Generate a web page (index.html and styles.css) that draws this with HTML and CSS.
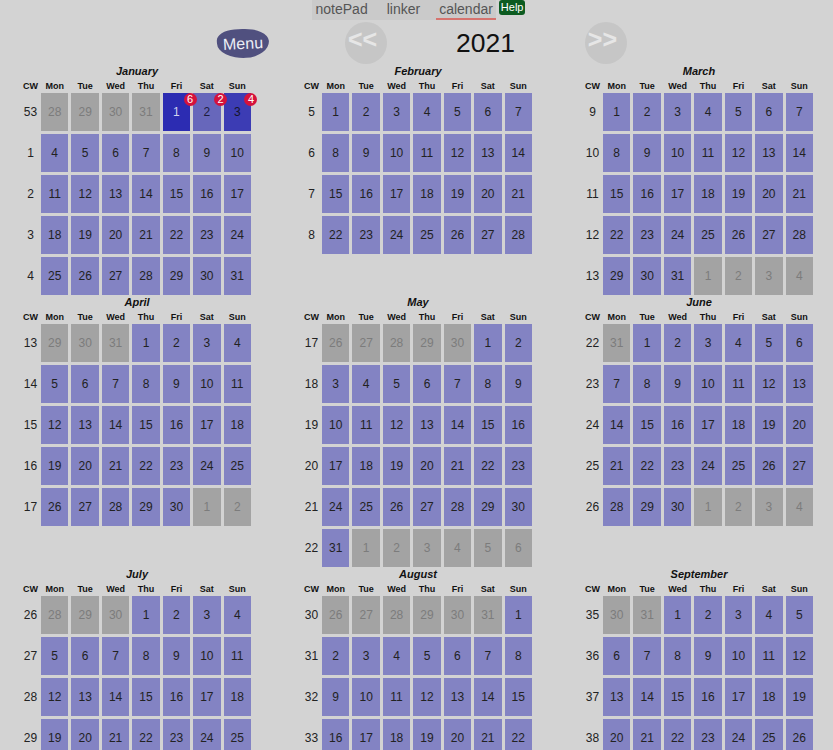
FILE: index.html
```html
<!DOCTYPE html>
<html lang="en">
<head>
<meta charset="utf-8">
<title>calendar</title>
<link rel="stylesheet" href="styles.css">
</head>
<body>
<nav class="nav">
  <div class="tabs">
    <span class="tab">notePad</span>
    <span class="tab">linker</span>
    <span class="tab active">calendar</span>
  </div>
  <span class="help">Help</span>
</nav>
<div class="toolbar">
  <div class="menu">Menu</div>
  <div class="arrow">&lt;&lt;</div>
  <div class="year">2021</div>
  <div class="arrow">&gt;&gt;</div>
</div>
<main class="cal">

<section class="month"><div class="mtitle">January</div><div class="mgrid">
<span class="h">CW</span><span class="h">Mon</span><span class="h">Tue</span><span class="h">Wed</span><span class="h">Thu</span><span class="h">Fri</span><span class="h">Sat</span><span class="h">Sun</span>
<span class="cw">53</span><span class="d o">28</span><span class="d o">29</span><span class="d o">30</span><span class="d o">31</span><span class="d s1">1<i class="badge">6</i></span><span class="d s2">2<i class="badge">2</i></span><span class="d s3">3<i class="badge">4</i></span>
<span class="cw">1</span><span class="d">4</span><span class="d">5</span><span class="d">6</span><span class="d">7</span><span class="d">8</span><span class="d">9</span><span class="d">10</span>
<span class="cw">2</span><span class="d">11</span><span class="d">12</span><span class="d">13</span><span class="d">14</span><span class="d">15</span><span class="d">16</span><span class="d">17</span>
<span class="cw">3</span><span class="d">18</span><span class="d">19</span><span class="d">20</span><span class="d">21</span><span class="d">22</span><span class="d">23</span><span class="d">24</span>
<span class="cw">4</span><span class="d">25</span><span class="d">26</span><span class="d">27</span><span class="d">28</span><span class="d">29</span><span class="d">30</span><span class="d">31</span>
</div></section>

<section class="month"><div class="mtitle">February</div><div class="mgrid">
<span class="h">CW</span><span class="h">Mon</span><span class="h">Tue</span><span class="h">Wed</span><span class="h">Thu</span><span class="h">Fri</span><span class="h">Sat</span><span class="h">Sun</span>
<span class="cw">5</span><span class="d">1</span><span class="d">2</span><span class="d">3</span><span class="d">4</span><span class="d">5</span><span class="d">6</span><span class="d">7</span>
<span class="cw">6</span><span class="d">8</span><span class="d">9</span><span class="d">10</span><span class="d">11</span><span class="d">12</span><span class="d">13</span><span class="d">14</span>
<span class="cw">7</span><span class="d">15</span><span class="d">16</span><span class="d">17</span><span class="d">18</span><span class="d">19</span><span class="d">20</span><span class="d">21</span>
<span class="cw">8</span><span class="d">22</span><span class="d">23</span><span class="d">24</span><span class="d">25</span><span class="d">26</span><span class="d">27</span><span class="d">28</span>
</div></section>

<section class="month"><div class="mtitle">March</div><div class="mgrid">
<span class="h">CW</span><span class="h">Mon</span><span class="h">Tue</span><span class="h">Wed</span><span class="h">Thu</span><span class="h">Fri</span><span class="h">Sat</span><span class="h">Sun</span>
<span class="cw">9</span><span class="d">1</span><span class="d">2</span><span class="d">3</span><span class="d">4</span><span class="d">5</span><span class="d">6</span><span class="d">7</span>
<span class="cw">10</span><span class="d">8</span><span class="d">9</span><span class="d">10</span><span class="d">11</span><span class="d">12</span><span class="d">13</span><span class="d">14</span>
<span class="cw">11</span><span class="d">15</span><span class="d">16</span><span class="d">17</span><span class="d">18</span><span class="d">19</span><span class="d">20</span><span class="d">21</span>
<span class="cw">12</span><span class="d">22</span><span class="d">23</span><span class="d">24</span><span class="d">25</span><span class="d">26</span><span class="d">27</span><span class="d">28</span>
<span class="cw">13</span><span class="d">29</span><span class="d">30</span><span class="d">31</span><span class="d o">1</span><span class="d o">2</span><span class="d o">3</span><span class="d o">4</span>
</div></section>

<section class="month"><div class="mtitle">April</div><div class="mgrid">
<span class="h">CW</span><span class="h">Mon</span><span class="h">Tue</span><span class="h">Wed</span><span class="h">Thu</span><span class="h">Fri</span><span class="h">Sat</span><span class="h">Sun</span>
<span class="cw">13</span><span class="d o">29</span><span class="d o">30</span><span class="d o">31</span><span class="d">1</span><span class="d">2</span><span class="d">3</span><span class="d">4</span>
<span class="cw">14</span><span class="d">5</span><span class="d">6</span><span class="d">7</span><span class="d">8</span><span class="d">9</span><span class="d">10</span><span class="d">11</span>
<span class="cw">15</span><span class="d">12</span><span class="d">13</span><span class="d">14</span><span class="d">15</span><span class="d">16</span><span class="d">17</span><span class="d">18</span>
<span class="cw">16</span><span class="d">19</span><span class="d">20</span><span class="d">21</span><span class="d">22</span><span class="d">23</span><span class="d">24</span><span class="d">25</span>
<span class="cw">17</span><span class="d">26</span><span class="d">27</span><span class="d">28</span><span class="d">29</span><span class="d">30</span><span class="d o">1</span><span class="d o">2</span>
</div></section>

<section class="month"><div class="mtitle">May</div><div class="mgrid">
<span class="h">CW</span><span class="h">Mon</span><span class="h">Tue</span><span class="h">Wed</span><span class="h">Thu</span><span class="h">Fri</span><span class="h">Sat</span><span class="h">Sun</span>
<span class="cw">17</span><span class="d o">26</span><span class="d o">27</span><span class="d o">28</span><span class="d o">29</span><span class="d o">30</span><span class="d">1</span><span class="d">2</span>
<span class="cw">18</span><span class="d">3</span><span class="d">4</span><span class="d">5</span><span class="d">6</span><span class="d">7</span><span class="d">8</span><span class="d">9</span>
<span class="cw">19</span><span class="d">10</span><span class="d">11</span><span class="d">12</span><span class="d">13</span><span class="d">14</span><span class="d">15</span><span class="d">16</span>
<span class="cw">20</span><span class="d">17</span><span class="d">18</span><span class="d">19</span><span class="d">20</span><span class="d">21</span><span class="d">22</span><span class="d">23</span>
<span class="cw">21</span><span class="d">24</span><span class="d">25</span><span class="d">26</span><span class="d">27</span><span class="d">28</span><span class="d">29</span><span class="d">30</span>
<span class="cw">22</span><span class="d">31</span><span class="d o">1</span><span class="d o">2</span><span class="d o">3</span><span class="d o">4</span><span class="d o">5</span><span class="d o">6</span>
</div></section>

<section class="month"><div class="mtitle">June</div><div class="mgrid">
<span class="h">CW</span><span class="h">Mon</span><span class="h">Tue</span><span class="h">Wed</span><span class="h">Thu</span><span class="h">Fri</span><span class="h">Sat</span><span class="h">Sun</span>
<span class="cw">22</span><span class="d o">31</span><span class="d">1</span><span class="d">2</span><span class="d">3</span><span class="d">4</span><span class="d">5</span><span class="d">6</span>
<span class="cw">23</span><span class="d">7</span><span class="d">8</span><span class="d">9</span><span class="d">10</span><span class="d">11</span><span class="d">12</span><span class="d">13</span>
<span class="cw">24</span><span class="d">14</span><span class="d">15</span><span class="d">16</span><span class="d">17</span><span class="d">18</span><span class="d">19</span><span class="d">20</span>
<span class="cw">25</span><span class="d">21</span><span class="d">22</span><span class="d">23</span><span class="d">24</span><span class="d">25</span><span class="d">26</span><span class="d">27</span>
<span class="cw">26</span><span class="d">28</span><span class="d">29</span><span class="d">30</span><span class="d o">1</span><span class="d o">2</span><span class="d o">3</span><span class="d o">4</span>
</div></section>

<section class="month"><div class="mtitle">July</div><div class="mgrid">
<span class="h">CW</span><span class="h">Mon</span><span class="h">Tue</span><span class="h">Wed</span><span class="h">Thu</span><span class="h">Fri</span><span class="h">Sat</span><span class="h">Sun</span>
<span class="cw">26</span><span class="d o">28</span><span class="d o">29</span><span class="d o">30</span><span class="d">1</span><span class="d">2</span><span class="d">3</span><span class="d">4</span>
<span class="cw">27</span><span class="d">5</span><span class="d">6</span><span class="d">7</span><span class="d">8</span><span class="d">9</span><span class="d">10</span><span class="d">11</span>
<span class="cw">28</span><span class="d">12</span><span class="d">13</span><span class="d">14</span><span class="d">15</span><span class="d">16</span><span class="d">17</span><span class="d">18</span>
<span class="cw">29</span><span class="d">19</span><span class="d">20</span><span class="d">21</span><span class="d">22</span><span class="d">23</span><span class="d">24</span><span class="d">25</span>
<span class="cw">30</span><span class="d">26</span><span class="d">27</span><span class="d">28</span><span class="d">29</span><span class="d">30</span><span class="d">31</span><span class="d o">1</span>
</div></section>

<section class="month"><div class="mtitle">August</div><div class="mgrid">
<span class="h">CW</span><span class="h">Mon</span><span class="h">Tue</span><span class="h">Wed</span><span class="h">Thu</span><span class="h">Fri</span><span class="h">Sat</span><span class="h">Sun</span>
<span class="cw">30</span><span class="d o">26</span><span class="d o">27</span><span class="d o">28</span><span class="d o">29</span><span class="d o">30</span><span class="d o">31</span><span class="d">1</span>
<span class="cw">31</span><span class="d">2</span><span class="d">3</span><span class="d">4</span><span class="d">5</span><span class="d">6</span><span class="d">7</span><span class="d">8</span>
<span class="cw">32</span><span class="d">9</span><span class="d">10</span><span class="d">11</span><span class="d">12</span><span class="d">13</span><span class="d">14</span><span class="d">15</span>
<span class="cw">33</span><span class="d">16</span><span class="d">17</span><span class="d">18</span><span class="d">19</span><span class="d">20</span><span class="d">21</span><span class="d">22</span>
<span class="cw">34</span><span class="d">23</span><span class="d">24</span><span class="d">25</span><span class="d">26</span><span class="d">27</span><span class="d">28</span><span class="d">29</span>
<span class="cw">35</span><span class="d">30</span><span class="d">31</span><span class="d o">1</span><span class="d o">2</span><span class="d o">3</span><span class="d o">4</span><span class="d o">5</span>
</div></section>

<section class="month"><div class="mtitle">September</div><div class="mgrid">
<span class="h">CW</span><span class="h">Mon</span><span class="h">Tue</span><span class="h">Wed</span><span class="h">Thu</span><span class="h">Fri</span><span class="h">Sat</span><span class="h">Sun</span>
<span class="cw">35</span><span class="d o">30</span><span class="d o">31</span><span class="d">1</span><span class="d">2</span><span class="d">3</span><span class="d">4</span><span class="d">5</span>
<span class="cw">36</span><span class="d">6</span><span class="d">7</span><span class="d">8</span><span class="d">9</span><span class="d">10</span><span class="d">11</span><span class="d">12</span>
<span class="cw">37</span><span class="d">13</span><span class="d">14</span><span class="d">15</span><span class="d">16</span><span class="d">17</span><span class="d">18</span><span class="d">19</span>
<span class="cw">38</span><span class="d">20</span><span class="d">21</span><span class="d">22</span><span class="d">23</span><span class="d">24</span><span class="d">25</span><span class="d">26</span>
<span class="cw">39</span><span class="d">27</span><span class="d">28</span><span class="d">29</span><span class="d">30</span><span class="d o">1</span><span class="d o">2</span><span class="d o">3</span>
</div></section>

<section class="month"><div class="mtitle">October</div><div class="mgrid">
<span class="h">CW</span><span class="h">Mon</span><span class="h">Tue</span><span class="h">Wed</span><span class="h">Thu</span><span class="h">Fri</span><span class="h">Sat</span><span class="h">Sun</span>
<span class="cw">39</span><span class="d o">27</span><span class="d o">28</span><span class="d o">29</span><span class="d o">30</span><span class="d">1</span><span class="d">2</span><span class="d">3</span>
<span class="cw">40</span><span class="d">4</span><span class="d">5</span><span class="d">6</span><span class="d">7</span><span class="d">8</span><span class="d">9</span><span class="d">10</span>
<span class="cw">41</span><span class="d">11</span><span class="d">12</span><span class="d">13</span><span class="d">14</span><span class="d">15</span><span class="d">16</span><span class="d">17</span>
<span class="cw">42</span><span class="d">18</span><span class="d">19</span><span class="d">20</span><span class="d">21</span><span class="d">22</span><span class="d">23</span><span class="d">24</span>
<span class="cw">43</span><span class="d">25</span><span class="d">26</span><span class="d">27</span><span class="d">28</span><span class="d">29</span><span class="d">30</span><span class="d">31</span>
</div></section>

<section class="month"><div class="mtitle">November</div><div class="mgrid">
<span class="h">CW</span><span class="h">Mon</span><span class="h">Tue</span><span class="h">Wed</span><span class="h">Thu</span><span class="h">Fri</span><span class="h">Sat</span><span class="h">Sun</span>
<span class="cw">44</span><span class="d">1</span><span class="d">2</span><span class="d">3</span><span class="d">4</span><span class="d">5</span><span class="d">6</span><span class="d">7</span>
<span class="cw">45</span><span class="d">8</span><span class="d">9</span><span class="d">10</span><span class="d">11</span><span class="d">12</span><span class="d">13</span><span class="d">14</span>
<span class="cw">46</span><span class="d">15</span><span class="d">16</span><span class="d">17</span><span class="d">18</span><span class="d">19</span><span class="d">20</span><span class="d">21</span>
<span class="cw">47</span><span class="d">22</span><span class="d">23</span><span class="d">24</span><span class="d">25</span><span class="d">26</span><span class="d">27</span><span class="d">28</span>
<span class="cw">48</span><span class="d">29</span><span class="d">30</span><span class="d o">1</span><span class="d o">2</span><span class="d o">3</span><span class="d o">4</span><span class="d o">5</span>
</div></section>

<section class="month"><div class="mtitle">December</div><div class="mgrid">
<span class="h">CW</span><span class="h">Mon</span><span class="h">Tue</span><span class="h">Wed</span><span class="h">Thu</span><span class="h">Fri</span><span class="h">Sat</span><span class="h">Sun</span>
<span class="cw">48</span><span class="d o">29</span><span class="d o">30</span><span class="d">1</span><span class="d">2</span><span class="d">3</span><span class="d">4</span><span class="d">5</span>
<span class="cw">49</span><span class="d">6</span><span class="d">7</span><span class="d">8</span><span class="d">9</span><span class="d">10</span><span class="d">11</span><span class="d">12</span>
<span class="cw">50</span><span class="d">13</span><span class="d">14</span><span class="d">15</span><span class="d">16</span><span class="d">17</span><span class="d">18</span><span class="d">19</span>
<span class="cw">51</span><span class="d">20</span><span class="d">21</span><span class="d">22</span><span class="d">23</span><span class="d">24</span><span class="d">25</span><span class="d">26</span>
<span class="cw">52</span><span class="d">27</span><span class="d">28</span><span class="d">29</span><span class="d">30</span><span class="d">31</span><span class="d o">1</span><span class="d o">2</span>
</div></section>

</main>
</body>
</html>
```

FILE: styles.css
```css
html, body {
  margin: 0;
  padding: 0;
}

body {
  background: #d3d3d3;
  font-family: "Liberation Sans", Arial, sans-serif;
  color: #222;
}

/* top navigation */
.nav {
  display: flex;
  justify-content: center;
  align-items: flex-start;
  padding-left: 4px;
  height: 20px;
}

.tabs {
  display: flex;
  gap: 13px;
  padding-left: 1px;
  background: #cacaca;
  height: 20px;
}

.tab {
  padding: 0 3px;
  font-size: 14px;
  line-height: 18px;
  color: #555;
  border-bottom: 2px solid transparent;
}

.tab.active {
  border-bottom-color: #d6736e;
}

.help {
  margin-left: 3px;
  padding: 0 2px;
  background: #0c5b20;
  color: #fff;
  font-size: 11px;
  line-height: 15px;
  border-radius: 3px;
}

/* year toolbar */
.toolbar {
  display: flex;
  align-items: center;
  height: 42px;
  margin-top: 2px;
  padding-left: 217px;
}

.menu {
  width: 52px;
  height: 29px;
  margin-right: 76px;
  display: flex;
  align-items: center;
  justify-content: center;
  background: #50507f;
  color: #eceef6;
  font-size: 16px;
  border-radius: 38% 55% 50% 60% / 40% 50% 60% 60%;
  transform: rotate(-3deg);
}

.arrow {
  width: 42px;
  height: 42px;
  box-sizing: border-box;
  padding: 0 7px 8px 0;
  display: flex;
  align-items: center;
  justify-content: center;
  border-radius: 50%;
  background: #c6c6c6;
  color: #e6e6e6;
  font-size: 25px;
  font-weight: bold;
}

.year {
  margin: 0 70px 0 69px;
  font-size: 26.5px;
  color: #111;
}

/* calendar */
.cal {
  display: grid;
  grid-template-columns: 281px 281px 234px;
  align-items: start;
  padding-left: 20px;
}

.month {
  width: 234px;
  box-sizing: border-box;
  padding: 0 3px;
}

.mtitle {
  text-align: center;
  font-size: 11px;
  line-height: 14px;
  font-weight: bold;
  font-style: italic;
  color: #111;
}

.mgrid {
  display: grid;
  grid-template-columns: 15px repeat(7, 27.43px);
  grid-template-rows: 12px;
  grid-auto-rows: 38px;
  gap: 3px;
}

.h {
  text-align: center;
  font-size: 9px;
  line-height: 12px;
  padding-top: 2px;
  font-weight: bold;
  color: #111;
}

.cw {
  display: flex;
  align-items: center;
  justify-content: center;
  font-size: 12px;
  color: #222;
}

.d {
  position: relative;
  display: flex;
  align-items: center;
  justify-content: center;
  background: #8383c3;
  font-size: 12px;
  color: #222;
}

.d.o {
  background: #a3a3a3;
  color: #7c7c7c;
}

.d.s1 {
  background: #2c2cb2;
  color: #d2d2ee;
}

.d.s2 {
  background: #6767bb;
  color: #1c1c3c;
}

.d.s3 {
  background: #3c3cb4;
  color: #15152a;
}

.badge {
  position: absolute;
  top: 0;
  right: -6.5px;
  z-index: 1;
  width: 13px;
  height: 13px;
  border-radius: 50%;
  background: #d5123b;
  color: #fff;
  font-size: 11px;
  line-height: 13px;
  font-style: normal;
  text-align: center;
}
```
